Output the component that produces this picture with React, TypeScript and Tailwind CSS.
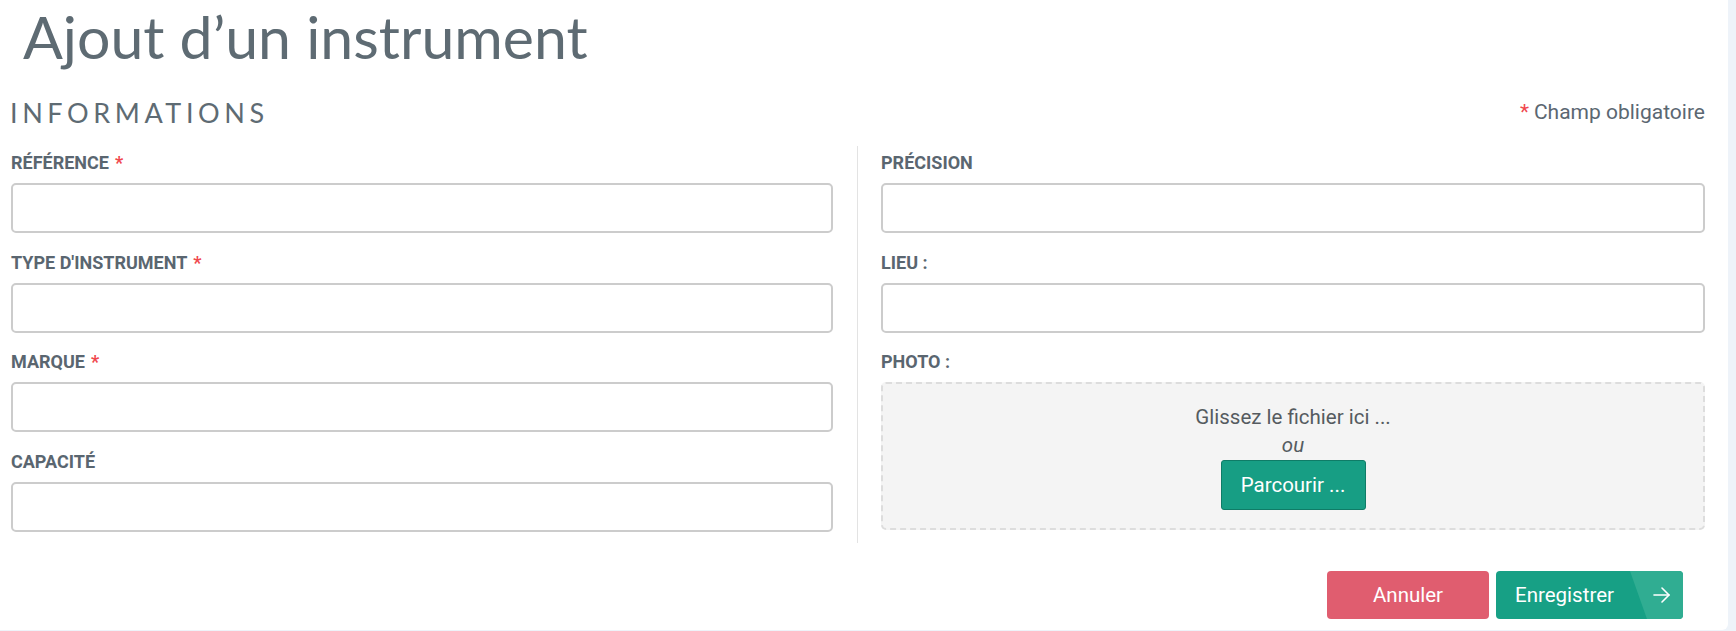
import React from 'react';

type Field = { label: string; required?: boolean };

const leftFields: Field[] = [
  { label: 'RÉFÉRENCE', required: true },
  { label: "TYPE D'INSTRUMENT", required: true },
  { label: 'MARQUE', required: true },
  { label: 'CAPACITÉ' },
];

const rightFields: Field[] = [{ label: 'PRÉCISION' }, { label: 'LIEU :' }];

const Label: React.FC<{ field: Field }> = ({ field }) => (
  <label className="block h-[24px] text-[18px] leading-[24px] font-bold text-[#5a6670]">
    {field.label}
    {field.required && <span className="ml-[6px] text-[#f0484e]">*</span>}
  </label>
);

const TextField: React.FC<{ field: Field }> = ({ field }) => (
  <div className="mb-[17.5px]">
    <Label field={field} />
    <input
      type="text"
      className="mt-[8px] block h-[50px] w-full rounded-[5px] border-2 border-[#cccccc] bg-white px-3 text-[18px] outline-none"
    />
  </div>
);

const ArrowIcon = () => (
  <svg width="17" height="16" viewBox="0 0 17 16" fill="none" stroke="white" strokeWidth="1.6" strokeLinecap="round" strokeLinejoin="round">
    <path d="M1 8h15" />
    <path d="M9 1l7 7-7 7" />
  </svg>
);

export default function App() {
  return (
    <div className="min-h-[631px] bg-[#eef3f9] font-['Roboto',sans-serif]">
      <div className="h-[630px] w-[1728px] rounded-br-[6px] bg-white">
        <h1 className="pl-[23px] font-['Lato',sans-serif] text-[59px] font-normal leading-[74px] text-[#5e6b73]">
          Ajout d’un instrument
        </h1>

        <div className="mt-[22px] flex h-[34px] items-center justify-between pl-[10px] pr-[23px]">
          <h2 className="font-['Lato',sans-serif] text-[27px] leading-[34px] tracking-[0.17em] text-[#5e6b73]">
            INFORMATIONS
          </h2>
          <p className="text-[21px] text-[#5b6772]">
            <span className="mr-[5px] text-[#f0484e]">*</span>Champ obligatoire
          </p>
        </div>

        <div className="mt-[16px] flex pl-[11px] pr-[23px]">
          <div className="w-[822px] pt-[5px]">
            {leftFields.map((f) => (
              <TextField key={f.label} field={f} />
            ))}
          </div>

          <div className="ml-[24px] mr-[23px] h-[397px] w-px bg-[#e3e3e3]" />

          <div className="flex-1 pt-[5px]">
            {rightFields.map((f) => (
              <TextField key={f.label} field={f} />
            ))}
            <Label field={{ label: 'PHOTO :' }} />
            <div className="mt-[8px] flex h-[148px] flex-col items-center rounded-[5px] border-2 border-dashed border-[#dddddd] bg-[#f4f4f4] pt-[19px]">
              <p className="text-[20.5px] leading-[28px] text-[#555b60]">Glissez le fichier ici ...</p>
              <p className="text-[20.5px] italic leading-[28px] text-[#555b60]">ou</p>
              <button className="mt-[1px] h-[50px] w-[145px] rounded-[3px] border border-[#0f7c67] bg-[#179e84] text-[20.5px] text-white">
                Parcourir ...
              </button>
            </div>
          </div>
        </div>

        <div className="mt-[22px] flex justify-end gap-[7px] pr-[45px]">
          <button className="h-[48px] w-[162px] rounded-[4px] bg-[#e05d6f] text-[20.5px] text-white">
            Annuler
          </button>
          <button className="relative flex h-[48px] w-[187px] items-center overflow-hidden rounded-[4px] bg-[#17a085] pl-[19px] text-[20.5px] text-white">
            <span className="relative z-10">Enregistrer</span>
            <span className="absolute inset-y-0 right-0 w-[53px] bg-[#30ad92] [clip-path:polygon(0_0,100%_0,100%_100%,17px_100%)]" />
            <span className="absolute right-[13px] top-1/2 z-10 -translate-y-1/2">
              <ArrowIcon />
            </span>
          </button>
        </div>
      </div>
    </div>
  );
}
